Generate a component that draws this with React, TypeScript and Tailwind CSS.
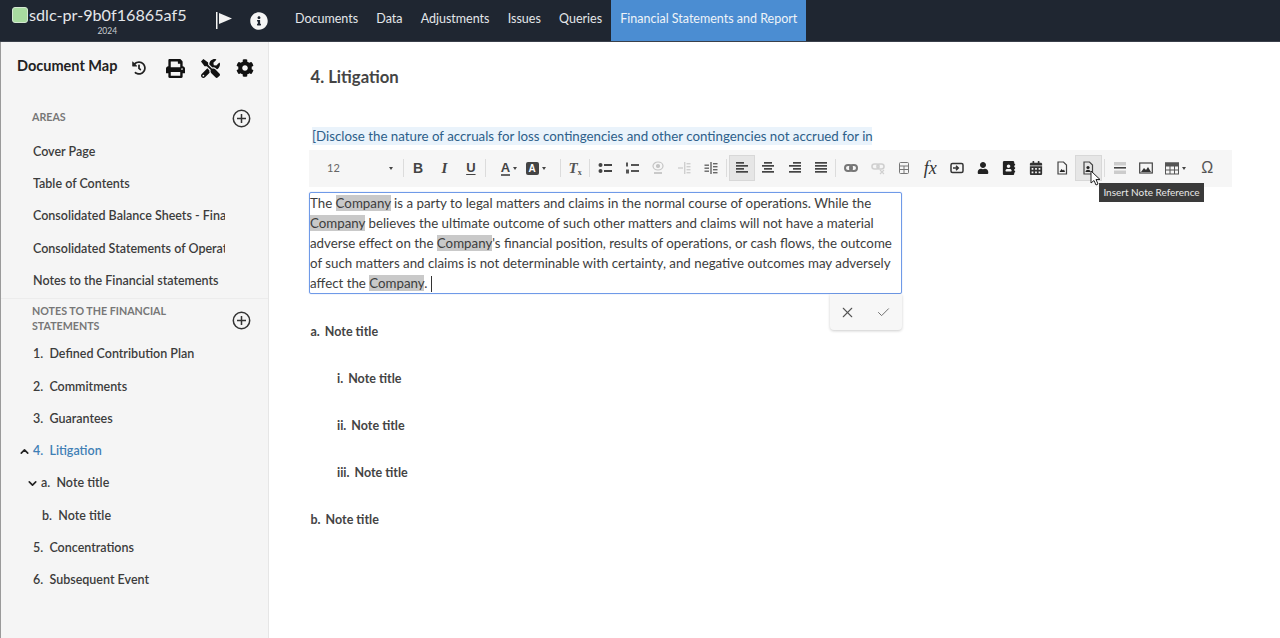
import React from "react";
import { FaPrint, FaTools, FaCog, FaHistory, FaInfoCircle, FaUser, FaAddressBook, FaCalendarAlt } from "react-icons/fa";
import { X, Check, ChevronUp, ChevronDown } from "lucide-react";

const Co = () => <span className="bg-[#c9c9c9]">Company</span>;

const Row = ({ children, cls = "" }: { children: React.ReactNode; cls?: string }) => (
  <div className={"h-[32.3px] flex items-center shrink-0 whitespace-nowrap overflow-hidden " + cls}>{children}</div>
);

const Btn = ({ w = "w-[26.35px]", active = false, children }: { w?: string; active?: boolean; children: React.ReactNode }) => (
  <div className={"h-[26px] flex items-center justify-center shrink-0 " + w + (active ? " bg-[#e6e6e6] border border-[#d8d8d8]" : "")}>{children}</div>
);

const Sep = ({ cls = "mx-[1px]" }: { cls?: string }) => <div className={"w-px h-[18px] bg-[#dcdcdc] shrink-0 " + cls} />;
const Caret = () => <div className="ml-[3px] w-0 h-0 border-l-[2.5px] border-r-[2.5px] border-t-[3px] border-l-transparent border-r-transparent border-t-[#444]" />;

const Lines = ({ rows, color = "#444" }: { rows: [number, number, number][]; color?: string }) => (
  <svg width="14" height="14" viewBox="0 0 14 14" fill={color}>
    {rows.map(([x, y, w], i) => <rect key={i} x={x} y={y} width={w} height="1.7" />)}
  </svg>
);

const PlusCircle = () => (
  <svg className="mt-[2px]" width="19" height="19" viewBox="0 0 19 19" fill="none" stroke="#333" strokeWidth="1.5">
    <circle cx="9.5" cy="9.5" r="8.2" />
    <path d="M9.5 5v9M5 9.5h9" />
  </svg>
);

const Toolbar = () => (
  <div className="h-[37px] w-[923px] bg-[#f6f6f6] flex items-center text-[#444]">
    <div className="w-[93px] shrink-0 flex items-center justify-between pl-[18px] pr-[9px] text-[11px] text-[#666]">
      <span>12</span><Caret />
    </div>
    <Sep />
    <Btn><span className="font-['Liberation_Sans'] font-bold text-[14px]">B</span></Btn>
    <Btn><span className="font-['Liberation_Serif'] italic font-bold text-[15px]">I</span></Btn>
    <Btn><span className="font-['Liberation_Sans'] font-bold text-[13px] underline underline-offset-2">U</span></Btn>
    <Sep />
    <Btn w="w-[33px]"><div className="flex items-center pl-[11px]"><span className="font-['Liberation_Sans'] font-bold text-[13px] leading-[13px] border-b-2 border-[#666]">A</span><Caret /></div></Btn>
    <Btn w="w-[31px] mr-[8px]"><div className="flex items-center"><span className="font-['Liberation_Sans'] font-bold text-[10px] leading-[13px] w-[13px] text-center bg-[#444] text-white rounded-[2px]">A</span><Caret /></div></Btn>
    <Sep />
    <Btn><span className="font-['Liberation_Serif'] italic font-bold text-[15px] leading-[14px] text-[#555]">T<sub className="text-[8px] not-italic">x</sub></span></Btn>
    <Sep />
    <Btn w="w-[27px]">
      <svg width="14" height="14" viewBox="0 0 14 14" fill="#444"><circle cx="2.5" cy="4" r="2" /><circle cx="2.5" cy="10" r="2" /><rect x="6" y="3" width="8" height="2" /><rect x="6" y="9" width="8" height="2" /></svg>
    </Btn>
    <Btn>
      <svg width="14" height="14" viewBox="0 0 14 14" fill="#555"><rect x="1" y="1.5" width="2" height="4" /><rect x="1" y="8.5" width="3" height="4" /><rect x="6" y="3" width="8" height="2" /><rect x="6" y="9" width="8" height="2" /></svg>
    </Btn>
    <Btn>
      <svg width="14" height="14" viewBox="0 0 14 14" fill="none" stroke="#c4c4c4" strokeWidth="1.2"><ellipse cx="7" cy="5" rx="5" ry="4" /><circle cx="7" cy="5" r="1.5" fill="#c4c4c4" /><path d="M3 12h8" strokeWidth="1.8" /></svg>
    </Btn>
    <Btn>
      <svg width="14" height="14" viewBox="0 0 14 14" fill="#cfcfcf"><rect x="7" y="1" width="1.4" height="12" /><rect x="9.5" y="2" width="4" height="1.4" /><rect x="9.5" y="5" width="4" height="1.4" /><rect x="9.5" y="8" width="4" height="1.4" /><rect x="9.5" y="11" width="4" height="1.4" /><rect x="1" y="6.3" width="5" height="1.4" /></svg>
    </Btn>
    <Btn>
      <svg width="14" height="14" viewBox="0 0 14 14" fill="#666"><rect x="6.3" y="1" width="1.4" height="12" /><rect x="9" y="2" width="4.5" height="1.4" /><rect x="9" y="5" width="4.5" height="1.4" /><rect x="9" y="8" width="4.5" height="1.4" /><rect x="9" y="11" width="4.5" height="1.4" /><rect x=".5" y="3.5" width="4.5" height="1.4" /><rect x=".5" y="6.5" width="4.5" height="1.4" /><rect x=".5" y="9.5" width="4.5" height="1.4" /></svg>
    </Btn>
    <Sep cls="ml-[2px] mr-[2px]" />
    <Btn active><Lines rows={[[1, 1, 8], [1, 4, 12], [1, 7, 8], [1, 10, 12]]} /></Btn>
    <Btn><Lines rows={[[3, 1, 8], [1, 4, 12], [3, 7, 8], [1, 10, 12]]} /></Btn>
    <Btn><Lines rows={[[5, 1, 8], [1, 4, 12], [5, 7, 8], [1, 10, 12]]} /></Btn>
    <Btn><Lines rows={[[1, 1, 12], [1, 4, 12], [1, 7, 12], [1, 10, 12]]} /></Btn>
    <Sep cls="ml-[1px] mr-[2px]" />
    <Btn>
      <svg width="14" height="14" viewBox="0 0 14 14" fill="none" stroke="#777" strokeWidth="2"><rect x="1" y="4" width="7" height="6" rx="3" /><rect x="6" y="4" width="7" height="6" rx="3" /></svg>
    </Btn>
    <Btn>
      <svg width="14" height="14" viewBox="0 0 14 14" fill="none" stroke="#d0d0d0" strokeWidth="1.6"><rect x="1" y="3" width="7" height="5" rx="2.5" /><rect x="6" y="3" width="7" height="5" rx="2.5" /><path d="M9 9l4 4m0-4l-4 4" strokeWidth="1.1" /></svg>
    </Btn>
    <Btn>
      <svg width="14" height="14" viewBox="0 0 14 14" fill="none" stroke="#777" strokeWidth="1"><rect x="2.5" y="1.5" width="9" height="11" rx="1" /><path d="M2.5 5h9M2.5 8.5h9M7 5v7.5" /></svg>
    </Btn>
    <Btn><span className="font-['Liberation_Serif'] italic text-[18px] text-[#333]">fx</span></Btn>
    <Btn>
      <svg width="14" height="14" viewBox="0 0 14 14" fill="none" stroke="#333" strokeWidth="1.5"><rect x="1" y="2.5" width="12" height="9" rx="1.500" /><path d="M3 7h5M6 4.800L8.300 7 6 9.200" /></svg>
    </Btn>
    <Btn><FaUser size={12} color="#222" /></Btn>
    <Btn><FaAddressBook size={14} color="#222" /></Btn>
    <Btn><FaCalendarAlt size={14} color="#333" /></Btn>
    <Btn>
      <svg width="14" height="14" viewBox="0 0 14 14" fill="none" stroke="#444" strokeWidth="1.2"><path d="M3 1h5.500L11.500 4v9h-8.500z" /><path d="M4.500 11l2-3 1.500 1.500 1-1 1 2.500z" fill="#222" stroke="none" /></svg>
    </Btn>
    <Btn active>
      <svg width="14" height="14" viewBox="0 0 14 14" fill="none" stroke="#444" strokeWidth="1.200"><path d="M3 1h5.500L11.500 4v9h-8.500z" /><circle cx="7" cy="6.500" r="1.600" fill="#222" stroke="none" /><path d="M4.500 11c0-3 5-3 5 0z" fill="#222" stroke="none" /></svg>
    </Btn>
    <Sep cls="ml-[2px] mr-[2px]" />
    <Btn>
      <svg width="14" height="14" viewBox="0 0 14 14"><rect x="1" y="1" width="12" height="3.500" fill="#ccc" /><rect x="1" y="6" width="12" height="1.600" fill="#444" /><rect x="1" y="9.500" width="12" height="3.500" fill="#ccc" /></svg>
    </Btn>
    <Btn>
      <svg width="14" height="14" viewBox="0 0 14 14" fill="none" stroke="#444" strokeWidth="1.200"><rect x=".7" y="2" width="12.600" height="10" /><path d="M2 11l3-4 2 2 2-3 3 5z" fill="#333" stroke="none" /></svg>
    </Btn>
    <Btn w="w-[27px]">
      <div className="flex items-center pl-[5px]">
        <svg width="14" height="13" viewBox="0 0 14 13" fill="none" stroke="#555" strokeWidth="1"><rect x=".5" y="1" width="13" height="11" /><rect x=".5" y="1" width="13" height="3" fill="#555" /><path d="M.5 8h13M5 4v8M9.500 4v8" /></svg>
        <Caret />
      </div>
    </Btn>
    <Btn w="w-[42px]"><span className="font-['Liberation_Sans'] text-[16px] text-[#555]">Ω</span></Btn>
  </div>
);

const NoteTitle = ({ n, indent = false }: { n: string; indent?: boolean }) => (
  <div className={"h-[47px] flex items-center font-bold text-[12.5px] text-[#444] " + (indent ? "pl-[28px]" : "pl-[1.500px]")}>
    <span className="mr-[5px]">{n}</span>Note title
  </div>
);

export default function App() {
  const nav = ["Documents", "Data", "Adjustments", "Issues", "Queries"];
  return (
    <div className="w-[1280px] h-[638px] overflow-hidden bg-white flex flex-col font-['Lato',sans-serif] relative">
      <header className="h-[42px] shrink-0 bg-[#1f2631] flex items-stretch text-[#e4e7ea] border-b border-[#3a404a]">
        <div className="w-[216px] shrink-0 flex pl-[12px]">
          <div className="w-[16px] h-[16px] mt-[7px] rounded-[3px] bg-[#a8dba0] border border-[#d5e8d2] shrink-0" />
          <div className="flex flex-col items-center">
            <span className="text-[16.200px] leading-[20px] mt-[5px] ml-[1px] whitespace-nowrap">sdlc-pr-9b0f16865af5</span>
            <span className="text-[8.5px] leading-[10px] mt-[1px] text-[#c9ccd0]">2024</span>
          </div>
        </div>
        <div className="w-[79px] shrink-0 flex items-center">
          <svg width="17" height="17" viewBox="0 0 17 17" fill="#f2f2f2"><rect x="0" y="0" width="1.500" height="17" /><path d="M3 1l13 5.500L3 12z" /></svg>
          <div className="ml-[17px]"><FaInfoCircle size={18} color="#f5f5f5" /></div>
        </div>
        <nav className="flex items-stretch text-[12.500px] whitespace-nowrap">
          {nav.map((n) => (
            <div key={n} className="flex items-center mr-[18.200px] pb-[3px]">{n}</div>
          ))}
          <div className="flex items-center bg-[#4b8dd2] text-[#eef3f8] px-[9px] -ml-[9px] pb-[3px]">Financial Statements and Report</div>
        </nav>
      </header>

      <div className="flex-1 flex min-h-0">
        <aside className="w-[269px] shrink-0 bg-[#f5f5f5] border-l border-[#9a9a9a] border-r-[#e6e6e6] border-r flex flex-col text-[12.500px] font-semibold text-[#3c3c3c]">
          <div className="h-[48px] mt-[2px] mb-[9px] flex items-center shrink-0">
            <span className="ml-[16px] w-[100px] font-bold text-[14.500px] text-[#222] -mt-[4px] whitespace-nowrap">Document Map</span>
            <div className="ml-[15px]"><FaHistory size={14} color="#222" /></div>
            <div className="ml-[20px]"><FaPrint size={19} color="#111" /></div>
            <div className="ml-[16px]"><FaTools size={19} color="#111" /></div>
            <div className="ml-[16px]"><FaCog size={18} color="#111" /></div>
          </div>
          <div className="h-[32px] shrink-0 flex items-center justify-between pl-[31px] pr-[17px] text-[10.700px] font-bold text-[#777]">
            <span>AREAS</span><PlusCircle />
          </div>
          <div className="mt-[3px] flex flex-col pl-[32px] pr-[43px]">
            <Row>Cover Page</Row>
            <Row>Table of Contents</Row>
            <Row>Consolidated Balance Sheets - Financial</Row>
            <Row>Consolidated Statements of Operations</Row>
            <Row>Notes to the Financial statements</Row>
          </div>
          <div className="h-px bg-[#ececec] shrink-0 mt-[1px]" />
          <div className="h-[40px] shrink-0 -mt-[1px] flex items-center justify-between pl-[31px] pr-[17px] text-[10.700px] leading-[15px] font-bold text-[#777]">
            <span className="w-[150px]">NOTES TO THE FINANCIAL STATEMENTS</span>
            <div className="mt-[2px]"><PlusCircle /></div>
          </div>
          <div className="flex flex-col pl-[32px] pr-[20px]">
            <Row>1.&nbsp; Defined Contribution Plan</Row>
            <Row>2.&nbsp; Commitments</Row>
            <Row>3.&nbsp; Guarantees</Row>
            <Row cls="-ml-[15px] text-[#3f7fb5]"><ChevronUp size={13} strokeWidth={3} color="#222" className="mr-[2px]" />4.&nbsp; Litigation</Row>
            <Row cls="-ml-[7px]"><ChevronDown size={13} strokeWidth={3} color="#222" className="mr-[2px]" />a.&nbsp; Note title</Row>
            <Row cls="pl-[9px]">b.&nbsp; Note title</Row>
            <Row>5.&nbsp; Concentrations</Row>
            <Row>6.&nbsp; Subsequent Event</Row>
          </div>
        </aside>

        <main className="flex-1 pl-[40px] relative min-w-0">
          <h1 className="mt-[24px] ml-[1.500px] text-[16.700px] leading-[22px] font-bold text-[#444]">4. Litigation</h1>
          <div className="mt-[39px] ml-[3px] h-[18px] text-[13.300px] leading-[18px] text-[#2d5f8a] bg-[#eaf3fb] w-[560px] whitespace-nowrap">[Disclose the nature of accruals for loss contingencies and other contingencies not accrued for in</div>
          <div className="mt-[4.500px]"><Toolbar /></div>
          <div className="mt-[5.500px] w-[593px] h-[102px] border border-[#6f9ae8] shadow-[0_0_1px_rgba(90,130,220,0.7)] rounded-[2px] text-[13.300px] leading-[20px] text-[#3d3d3d] relative">
            <div className="-mt-[0.500px]">The <Co /> is a party to legal matters and claims in the normal course of operations. While the <Co /> believes the ultimate outcome of such other matters and claims will not have a material adverse effect on the <Co />'s financial position, results of operations, or cash flows, the outcome of such matters and claims is not determinable with certainty, and negative outcomes may adversely affect the <Co />. <span className="inline-block w-px h-[16px] bg-[#333] align-middle" /></div>
            <div className="absolute right-[-1px] top-[101px] w-[72px] h-[36px] bg-[#f7f7f7] rounded-b-[4px] shadow-[0_1px_3px_rgba(0,0,0,0.2)] flex items-center justify-between pl-[9px] pr-[11px]">
              <X size={17} color="#555" strokeWidth={1.500} />
              <Check size={15} color="#666" strokeWidth={1.500} />
            </div>
          </div>
          <div className="mt-[14.500px]">
            <NoteTitle n="a." />
            <NoteTitle n="i." indent />
            <NoteTitle n="ii." indent />
            <NoteTitle n="iii." indent />
            <NoteTitle n="b." />
          </div>
          <div className="absolute left-[830px] top-[141px] w-[105px] h-[19px] bg-[#3a3a3a] text-[#e8e8e8] text-[10px] leading-[19px] text-center whitespace-nowrap">Insert Note Reference</div>
          <svg className="absolute left-[821px] top-[128px]" width="11" height="16" viewBox="0 0 11 16"><path d="M1 1v12l3-2.500 2 4.500 2-1-2-4.500h4z" fill="#fff" stroke="#222" strokeWidth="1" /></svg>
        </main>
      </div>
    </div>
  );
}
